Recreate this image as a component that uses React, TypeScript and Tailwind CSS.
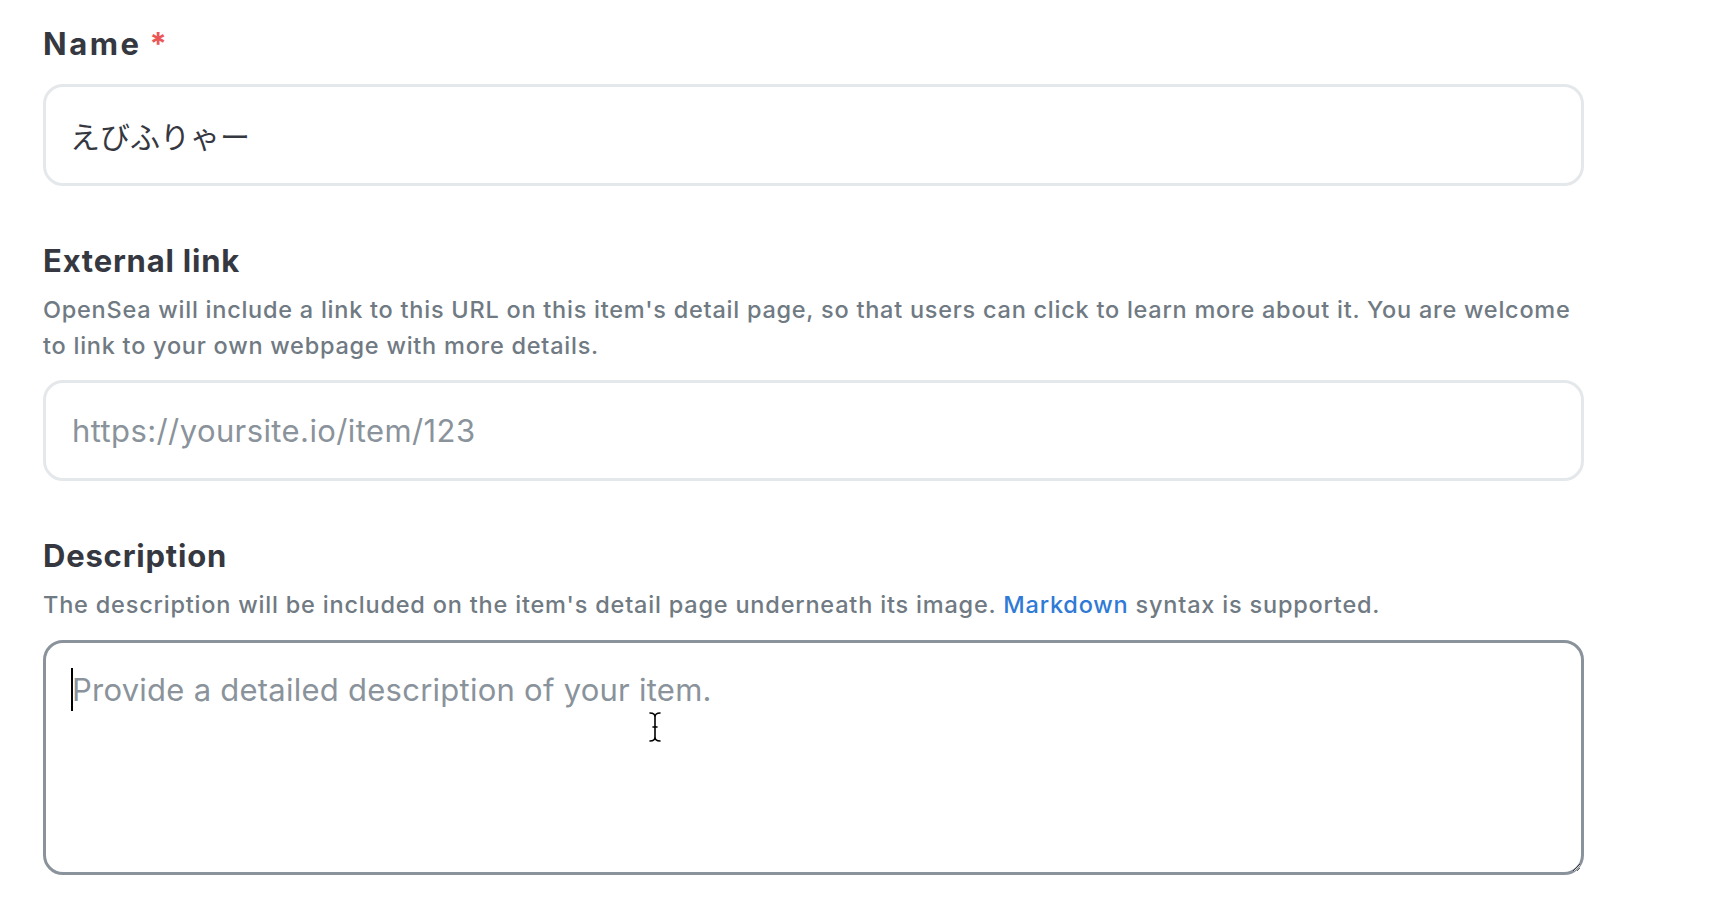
import React from "react";

const font = { fontFamily: '"Inter", "Noto Sans CJK JP", sans-serif' };

function IBeam() {
  return (
    <svg width="14" height="32" viewBox="0 0 14 32" className="absolute left-[648px] top-[711px] pointer-events-none">
      <g fill="none" strokeLinecap="round">
        <path d="M2 2 Q7 2 7 6 Q7 2 12 2 M7 6 L7 26 M2 30 Q7 30 7 26 Q7 30 12 30 M5 16 L9 16" stroke="#ffffff" strokeWidth="3.2" />
        <path d="M2 2 Q7 2 7 6 Q7 2 12 2 M7 6 L7 26 M2 30 Q7 30 7 26 Q7 30 12 30 M5 16 L9 16" stroke="#000000" strokeWidth="1.6" />
      </g>
    </svg>
  );
}

export default function App() {
  return (
    <div className="relative w-full h-[914px] bg-white overflow-hidden" style={font}>
      <div className="ml-[43px] w-[1541px] flex flex-col">
        {/* Name */}
        <div className="mt-[24px] flex items-start text-[31px] leading-[40px] font-bold text-[#353840]">
          <span className="tracking-[2.5px]">Name</span>
          <span className="ml-[8px] text-[#eb5757]">*</span>
        </div>
        <input
          className="mt-[20px] h-[102px] w-full rounded-[20px] border-[3px] border-[#e5e8eb] bg-white pl-[24px] pr-[27px] text-[30px] text-[#353840] outline-none"
          defaultValue="えびふりゃー"
          readOnly
        />

        {/* External link */}
        <div className="mt-[55px] text-[31px] leading-[40px] font-bold tracking-[0.8px] text-[#353840]">External link</div>
        <p className="mt-[11px] text-[23.5px] leading-[36px] font-medium tracking-[0.75px] text-[#707a83] whitespace-nowrap">
          OpenSea will include a link to this URL on this item's detail page, so that users can click to learn more about it. You are welcome
          <br />
          to link to your own webpage with more details.
        </p>
        <input
          className="mt-[16px] h-[101px] w-full rounded-[20px] border-[3px] border-[#e5e8eb] bg-white pl-[26px] pr-[26px] text-[31px] tracking-[0.4px] text-[#353840] outline-none placeholder:text-[#8a939b]"
          placeholder="https://yoursite.io/item/123"
          readOnly
        />

        {/* Description */}
        <div className="mt-[55px] text-[31px] leading-[40px] font-bold tracking-[0.8px] text-[#353840]">Description</div>
        <p className="mt-[11px] text-[23.5px] leading-[36px] font-medium tracking-[0.8px] text-[#707a83] whitespace-nowrap">
          The description will be included on the item's detail page underneath its image.{" "}
          <a className="text-[#2f7ad6]">Markdown</a> syntax is supported.
        </p>
        <div className="relative mt-[17px]">
          <textarea
            className="block h-[235px] w-full rounded-[20px] border-[3.5px] border-[#8a939b] bg-white pl-[26px] pr-[26px] pt-[24px] text-[31px] leading-[45px] tracking-[0.25px] text-[#353840] outline-none placeholder:text-[#8a939b]"
            placeholder="Provide a detailed description of your item."
            readOnly
          />
          <div className="absolute left-[28px] top-[28px] h-[43px] w-[2px] bg-black" />
        </div>
      </div>
      <IBeam />
    </div>
  );
}
